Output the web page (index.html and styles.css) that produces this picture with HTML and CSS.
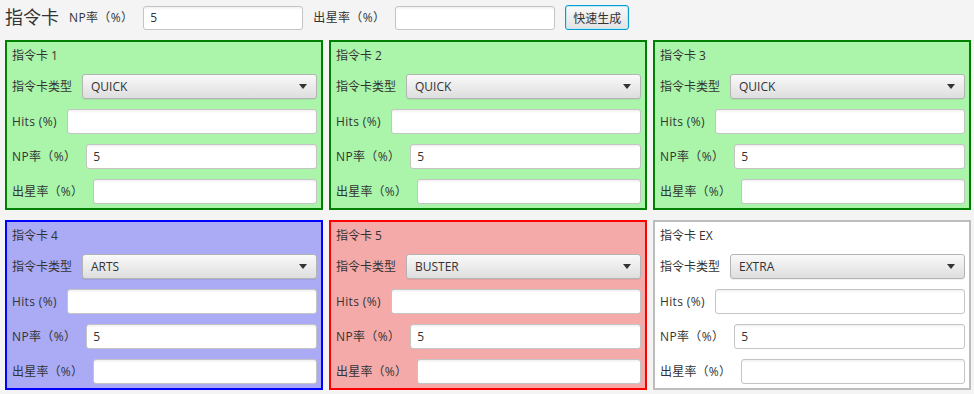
FILE: index.html
```html
<!DOCTYPE html>
<html lang="zh-CN">
<head>
    <meta charset="UTF-8">
    <meta name="viewport" content="width=device-width, initial-scale=1.0">
    <title>指令卡</title>
    <link rel="stylesheet" href="styles.css">
</head>
<body>
    <div class="toolbar">
        <span class="heading">指令卡</span>
        <label class="label">NP率（%）</label>
        <input class="text-field top" value="5">
        <label class="label">出星率（%）</label>
        <input class="text-field top">
        <button class="button">快速生成</button>
    </div>

    <div class="cards">
        <div class="card quick">
            <div class="card-title">指令卡 1</div>
            <div class="row"><span class="label type">指令卡类型</span><div class="combo"><span>QUICK</span><svg width="8" height="5" viewBox="0 0 8 5"><path d="M0 0h8L4 5z" fill="#333"/></svg></div></div>
            <div class="row"><span class="label">Hits (%)</span><input class="text-field"></div>
            <div class="row"><span class="label">NP率（%）</span><input class="text-field" value="5"></div>
            <div class="row"><span class="label star">出星率（%）</span><input class="text-field"></div>
        </div>
        <div class="card quick">
            <div class="card-title">指令卡 2</div>
            <div class="row"><span class="label type">指令卡类型</span><div class="combo"><span>QUICK</span><svg width="8" height="5" viewBox="0 0 8 5"><path d="M0 0h8L4 5z" fill="#333"/></svg></div></div>
            <div class="row"><span class="label">Hits (%)</span><input class="text-field"></div>
            <div class="row"><span class="label">NP率（%）</span><input class="text-field" value="5"></div>
            <div class="row"><span class="label star">出星率（%）</span><input class="text-field"></div>
        </div>
        <div class="card quick">
            <div class="card-title">指令卡 3</div>
            <div class="row"><span class="label type">指令卡类型</span><div class="combo"><span>QUICK</span><svg width="8" height="5" viewBox="0 0 8 5"><path d="M0 0h8L4 5z" fill="#333"/></svg></div></div>
            <div class="row"><span class="label">Hits (%)</span><input class="text-field"></div>
            <div class="row"><span class="label">NP率（%）</span><input class="text-field" value="5"></div>
            <div class="row"><span class="label star">出星率（%）</span><input class="text-field"></div>
        </div>
        <div class="card arts">
            <div class="card-title">指令卡 4</div>
            <div class="row"><span class="label type">指令卡类型</span><div class="combo"><span>ARTS</span><svg width="8" height="5" viewBox="0 0 8 5"><path d="M0 0h8L4 5z" fill="#333"/></svg></div></div>
            <div class="row"><span class="label">Hits (%)</span><input class="text-field"></div>
            <div class="row"><span class="label">NP率（%）</span><input class="text-field" value="5"></div>
            <div class="row"><span class="label star">出星率（%）</span><input class="text-field"></div>
        </div>
        <div class="card buster">
            <div class="card-title">指令卡 5</div>
            <div class="row"><span class="label type">指令卡类型</span><div class="combo"><span>BUSTER</span><svg width="8" height="5" viewBox="0 0 8 5"><path d="M0 0h8L4 5z" fill="#333"/></svg></div></div>
            <div class="row"><span class="label">Hits (%)</span><input class="text-field"></div>
            <div class="row"><span class="label">NP率（%）</span><input class="text-field" value="5"></div>
            <div class="row"><span class="label star">出星率（%）</span><input class="text-field"></div>
        </div>
        <div class="card extra">
            <div class="card-title">指令卡 EX</div>
            <div class="row"><span class="label type">指令卡类型</span><div class="combo"><span>EXTRA</span><svg width="8" height="5" viewBox="0 0 8 5"><path d="M0 0h8L4 5z" fill="#333"/></svg></div></div>
            <div class="row"><span class="label">Hits (%)</span><input class="text-field"></div>
            <div class="row"><span class="label">NP率（%）</span><input class="text-field" value="5"></div>
            <div class="row"><span class="label star">出星率（%）</span><input class="text-field"></div>
        </div>
    </div>
</body>
</html>
```

FILE: styles.css
```css
body {
    margin: 0;
    padding: 5px 3px 3px 5px;
    background-color: #f4f4f4;
    color: #333;
    font-family: "Open Sans", "Noto Sans CJK SC", sans-serif;
    font-size: 12px;
}
.toolbar {
    display: flex;
    align-items: center;
    gap: 10px;
    height: 25px;
}
.heading {
    font-size: 18px;
    line-height: 25px;
}
.label {
    white-space: nowrap;
    line-height: 17px;
    letter-spacing: 0.35px;
}
.label.type {
    letter-spacing: 0;
}
.label.star {
    letter-spacing: 0.2px;
}
.text-field {
    box-sizing: border-box;
    height: 25px;
    margin: 0;
    padding: 0 6px;
    border: 1px solid #c4c4c4;
    border-radius: 3px;
    background: linear-gradient(#f0f0f0, #fff 3px);
    color: #333;
    font-family: inherit;
    font-size: 12px;
    outline: 0;
}
.text-field.top {
    width: 160px;
    height: 24px;
}
.button {
    box-sizing: border-box;
    height: 25px;
    padding: 0 7px;
    border: 1px solid #039ed3;
    border-radius: 3px;
    box-shadow: inset 0 0 0 1px #bfe6f5;
    background: linear-gradient(#fafafa, #e2e2e2);
    color: #333;
    font-family: inherit;
    font-size: 12px;
}
.cards {
    display: grid;
    grid-template-columns: repeat(3, 318px);
    column-gap: 6px;
    row-gap: 10px;
    margin-top: 10px;
}
.card {
    display: flex;
    flex-direction: column;
    gap: 10px;
    padding: 5px 4px 4px 5px;
    border: 2px solid #bdbdbd;
    background: #fff;
}
.card.quick {
    border-color: #008000;
    background: #aaf5aa;
}
.card.arts {
    border-color: #0000ff;
    background: #aaaaf5;
}
.card.buster {
    border-color: #ff0000;
    background: #f5aaaa;
}
.card-title {
    height: 17px;
    line-height: 17px;
}
.row {
    display: flex;
    align-items: center;
    gap: 10px;
}
.row .text-field {
    flex: 1;
    min-width: 0;
}
.combo {
    flex: 1;
    box-sizing: border-box;
    height: 25px;
    display: flex;
    align-items: center;
    justify-content: space-between;
    padding: 0 9px 0 8px;
    border: 1px solid #b4b4b4;
    border-radius: 3px;
    background: linear-gradient(#f9f9f9, #dedede);
    box-shadow: 0 1px 0 rgba(0, 0, 0, 0.06);
}
```
